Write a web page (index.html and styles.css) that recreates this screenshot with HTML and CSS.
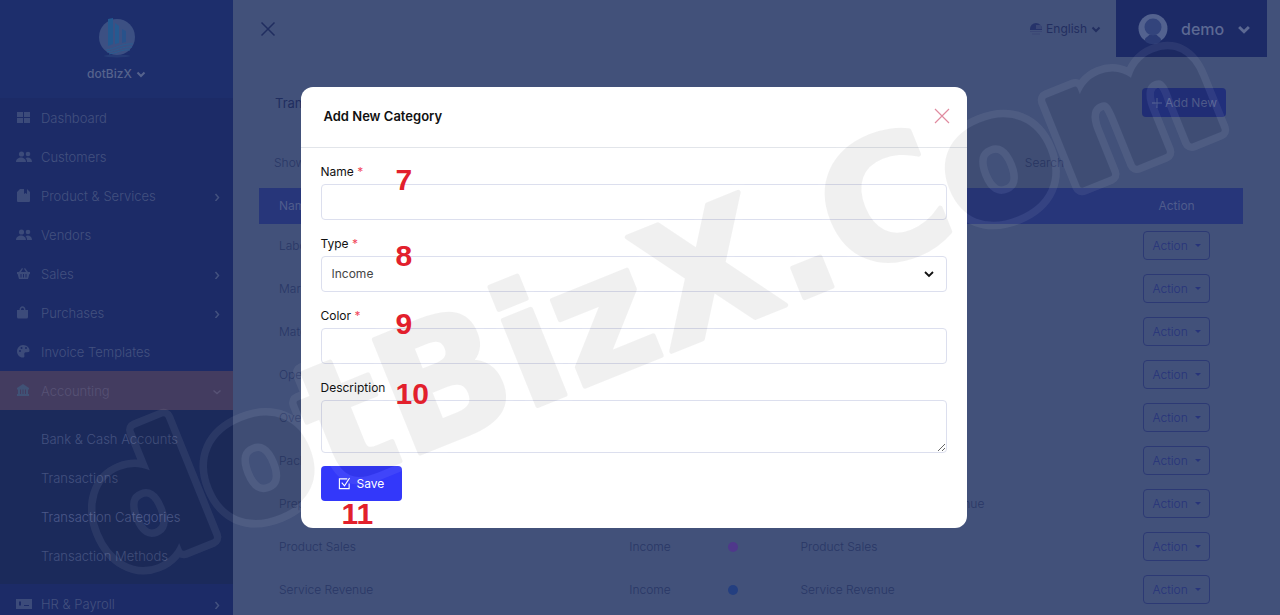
FILE: index.html
```html
<!DOCTYPE html>
<html lang="en">
<head>
<meta charset="utf-8">
<title>Transaction Categories - dotBizX</title>
<link rel="stylesheet" href="styles.css">
</head>
<body>
<div class="app">
  <nav class="sidebar">
    <div class="brand">
      <svg class="brand-logo" viewBox="0 0 40 42">
        <ellipse cx="20" cy="39" rx="13" ry="1.500" fill="#263b75"/>
        <circle cx="20" cy="20" r="18" fill="#3c5083"/>
        <path d="M11 2l5-1v26l-5 2z" fill="#23588f"/><path d="M18 6l4 3v17l-4 1z" fill="#255a91"/><path d="M25 12l4 2v11l-4 1z" fill="#28528b"/>
        <path d="M9 33c9-1 16-7 27-6M10 35c9-1 16-6 25-5M12 37c8-1 13-5 21-4" fill="none" stroke="#2a5c90" stroke-width="1"/>
      </svg>
      <button class="brand-name" type="button">dotBizX <svg class="caret" viewBox="0 0 10 10"><path d="M1.500 3.500L5 7l3.500-3.500"/></svg></button>
    </div>
    <ul class="menu">
      <li><a href="#"><svg class="icon" viewBox="0 0 16 16"><path d="M1 2h6v5H1zM8 2h6v5H8zM1 8h6v5H1zM8 8h6v5H8z"/></svg>Dashboard</a></li>
      <li><a href="#"><svg class="icon" viewBox="0 0 16 16"><circle cx="5.500" cy="5" r="2.600"/><circle cx="12" cy="5" r="2.300"/><path d="M0 13c0-6 10-6 10 0zM11 13c0-2-.5-3-1.500-4 3-1.500 6.500 0 6.500 4z"/></svg>Customers</a></li>
      <li><a href="#"><svg class="icon" viewBox="0 0 16 16"><path d="M4 1h4v5l1.500-1L11 6V1l3 3v9q0 1-1 1H2q-1 0-1-1V4z"/></svg>Product &amp; Services<svg class="chev" viewBox="0 0 10 10"><path d="M3.500 3L6.500 6.500 3.500 10"/></svg></a></li>
      <li><a href="#"><svg class="icon" viewBox="0 0 16 16"><circle cx="5.500" cy="5" r="2.600"/><circle cx="12" cy="5" r="2.300"/><path d="M0 13c0-6 10-6 10 0zM11 13c0-2-.5-3-1.500-4 3-1.500 6.500 0 6.500 4z"/></svg>Vendors</a></li>
      <li><a href="#"><svg class="icon" viewBox="0 0 16 16"><path fill-rule="evenodd" d="M1 6h2l3-4 1 .7L5 6h5L8 2.700 9 2l3 4h2v2h-.6L12 13H3L1.600 8H1zM4.500 8v3.500h1V8zM7 8v3.500h1V8zM9.500 8v3.500h1V8z"/></svg>Sales<svg class="chev" viewBox="0 0 10 10"><path d="M3.500 3L6.500 6.500 3.500 10"/></svg></a></li>
      <li><a href="#"><svg class="icon" viewBox="0 0 16 16"><path fill-rule="evenodd" d="M1 5h2.500c0-5 6-5 6 0H12v7q0 1.500-1.500 1.500h-8Q1 13.500 1 12zM5 5h3c0-3-3-3-3 0z"/></svg>Purchases<svg class="chev" viewBox="0 0 10 10"><path d="M3.500 3L6.500 6.500 3.500 10"/></svg></a></li>
      <li><a href="#"><svg class="icon" viewBox="0 0 16 16"><path fill-rule="evenodd" d="M7 1c4 0 7 3 6.500 6-.2 2-4 .5-5 2-.8 1.500 1 4-1 4.500C4 14 1 11 1 7.500S3.500 1 7 1zM3 7a1 1 0 102 0 1 1 0 00-2 0zm1.500-3a1 1 0 102 0 1 1 0 00-2 0zM9 4a1 1 0 102 0 1 1 0 00-2 0z"/></svg>Invoice Templates</a></li>
      <li class="active"><a href="#"><svg class="icon" viewBox="0 0 16 16"><path fill-rule="evenodd" d="M1 5l6-4 6 4v1.500h-1V11h1v2H1v-2h1V6.500H1zM4 6.500V11h1V6.500zm2.500 0V11h1V6.500zm2.500 0V11h1V6.500z"/></svg>Accounting<svg class="chev" viewBox="0 0 10 10"><path d="M1.500 4.500l3.500 3 3.500-3"/></svg></a>
        <ul class="submenu">
          <li><a href="#">Bank &amp; Cash Accounts</a></li>
          <li><a href="#">Transactions</a></li>
          <li class="current"><a href="#">Transaction Categories</a></li>
          <li><a href="#">Transaction Methods</a></li>
        </ul>
      </li>
      <li><a href="#"><svg class="icon" viewBox="0 0 16 16"><path fill-rule="evenodd" d="M0 3h16v10H0zM3 5.500v4h2v-4zM8 9v1h5V9z"/></svg>HR &amp; Payroll<svg class="chev" viewBox="0 0 10 10"><path d="M3.500 3L6.500 6.500 3.500 10"/></svg></a></li>
    </ul>
  </nav>

  <div class="content">
    <header class="topbar">
      <button class="toggle" type="button" aria-label="Toggle menu"><svg viewBox="0 0 16 16"><path d="M1.500 1.500l13 13M14.500 1.500l-13 13"/></svg></button>
      <button class="language" type="button"><svg class="flag" viewBox="0 0 12 12"><path d="M0 6a6 6 0 0112 0v1H0z" fill="#26336a"/><path d="M6 2h5l1 4H6zM0 8h12v1H0zM2 10.500h8v1H2z" fill="#3a4675"/></svg>English <svg class="caret" viewBox="0 0 10 10"><path d="M1.500 3.500L5 7l3.500-3.500"/></svg></button>
      <button class="user" type="button"><svg class="avatar" viewBox="0 0 30 30"><circle cx="15" cy="14.500" r="14.500" fill="#53628f"/><path d="M15 30c-5 0-8-2-8-4 0-3 3-3 4-5h8c1 2 4 2 4 5 0 2-3 4-8 4z" fill="#2b3b75"/><circle cx="15" cy="13" r="8.500" fill="#33447c"/></svg><span>demo</span><svg class="caret" viewBox="0 0 10 10"><path d="M1.500 3.500L5 7l3.500-3.500"/></svg></button>
    </header>
    <main class="page">
      <div class="page-head">
        <h1>Transaction Categories</h1>
        <button class="add" type="button"><svg viewBox="0 0 10 10"><path d="M5 0v10M0 5h10"/></svg>Add New</button>
      </div>
      <div class="filters"><span>Show</span><span class="search">Search</span></div>
      <table class="grid">
        <colgroup><col class="c-name"><col class="c-type"><col class="c-color"><col class="c-desc"><col class="c-act"></colgroup>
        <thead><tr><th>Name</th><th>Type</th><th>Color</th><th>Description</th><th class="act">Action</th></tr></thead>
        <tbody>
          <tr><td>Labor</td><td></td><td></td><td></td><td class="act"><button type="button">Action</button></td></tr>
          <tr><td>Marketing</td><td></td><td></td><td></td><td class="act"><button type="button">Action</button></td></tr>
          <tr><td>Materials</td><td></td><td></td><td></td><td class="act"><button type="button">Action</button></td></tr>
          <tr><td>Operating</td><td></td><td></td><td></td><td class="act"><button type="button">Action</button></td></tr>
          <tr><td>Overhead</td><td></td><td></td><td></td><td class="act"><button type="button">Action</button></td></tr>
          <tr><td>Packaging</td><td></td><td></td><td></td><td class="act"><button type="button">Action</button></td></tr>
          <tr><td>Prepaid</td><td></td><td></td><td>Prepayments and Other Revenue</td><td class="act"><button type="button">Action</button></td></tr>
          <tr><td>Product Sales</td><td>Income</td><td><i class="dot purple"></i></td><td>Product Sales</td><td class="act"><button type="button">Action</button></td></tr>
          <tr><td>Service Revenue</td><td>Income</td><td><i class="dot blue"></i></td><td>Service Revenue</td><td class="act"><button type="button">Action</button></td></tr>
        </tbody>
      </table>
    </main>
  </div>
</div>

<div class="overlay">
  <section class="modal" role="dialog" aria-labelledby="dialog-title">
    <header class="modal-head">
      <h2 id="dialog-title">Add New Category</h2>
      <button class="close" type="button" aria-label="Close"><svg viewBox="0 0 16 16"><path d="M1 1l14 14M15 1L1 15"/></svg></button>
    </header>
    <form class="modal-body">
      <div class="field"><label for="name">Name <em>*</em></label><input id="name" type="text"><b class="step">7</b></div>
      <div class="field"><label for="type">Type <em>*</em></label>
        <div class="select"><select id="type"><option>Income</option><option>Expense</option></select><svg viewBox="0 0 10 10"><path d="M1 3l4 4 4-4"/></svg></div><b class="step low">8</b></div>
      <div class="field"><label for="color">Color <em>*</em></label><input id="color" type="text"><b class="step">9</b></div>
      <div class="field"><label for="description">Description</label><textarea id="description"></textarea><b class="step high">10</b></div>
      <div class="actions"><button class="save" type="submit"><svg viewBox="0 0 14 14"><path d="M10 2H1.500v10.500H12V7M4 6l3 3.500L12.500 1"/></svg>Save</button><b class="step under">11</b></div>
    </form>
  </section>
</div>

<svg class="watermark" viewBox="0 0 1280 615" aria-hidden="true">
  <defs>
    <text id="mark" transform="translate(113 577) rotate(-22)">dotBizX.Com</text>
    <mask id="outside" maskUnits="userSpaceOnUse" x="0" y="0" width="1280" height="615">
      <rect width="1280" height="615" fill="#fff"/>
      <use href="#mark" fill="#000" stroke="#000" stroke-width="5"/>
    </mask>
  </defs>
  <g mask="url(#outside)"><use class="halo" href="#mark"/></g>
  <use class="ink" href="#mark"/>
</svg>
</body>
</html>
```
FILE: styles.css
```css
* { box-sizing: border-box; }
body {
  margin: 0;
  height: 100vh;
  overflow: hidden;
  position: relative;
  background: #42517a;
  color: #293766;
  font: 300 13px/20px Inter, "Open Sans", sans-serif;
}
button, input, select, textarea { font: inherit; color: inherit; }
button { border: 0; background: none; padding: 0; display: flex; align-items: center; cursor: pointer; }
a { color: inherit; text-decoration: none; }
ul { list-style: none; margin: 0; padding: 0; }
svg { flex: none; }
.caret, .chev { width: 10px; height: 10px; fill: none; stroke: currentColor; stroke-width: 2; }
.chev { margin-left: auto; stroke-width: 1.5; }

.app { display: flex; height: 100%; padding-right: 13px; overflow: hidden; }

.sidebar { width: 233px; flex: none; background: #1c2b67; color: #43517f; }
.brand { height: 98px; padding-top: 17px; display: flex; flex-direction: column; align-items: center; gap: 6px; background: #1d2e6c; }
.brand-logo { width: 40px; height: 42px; }
.brand-name { gap: 4px; font-size: 12px; font-weight: 500; line-height: 18px; color: #56638d; }
.menu a { display: flex; align-items: center; height: 39px; padding: 0 11px 0 16px; }
.icon { width: 16px; height: 16px; margin-right: 9px; fill: #3c4b7a; }
.active > a { background: #433c60; color: #575275; }
.active .icon { fill: #405276; }
.submenu { padding: 9px 0; background: #1b2a5b; }
.submenu a { padding-left: 41px; }
.submenu .current { color: #4c598a; }

.content { flex: 1; min-width: 0; }
.topbar { display: flex; height: 57px; align-items: center; padding-left: 27px; }
.toggle { margin-right: auto; color: #202d60; }
.toggle svg { width: 16px; height: 16px; fill: none; stroke: currentColor; stroke-width: 1.5; }
.language { gap: 4px; margin-right: 15px; font-size: 12px; font-weight: 400; color: #222e60; }
.flag { width: 12px; height: 12px; }
.user { height: 57px; width: 151px; padding: 0 20px 0 22px; gap: 13px; background: #1c2a66; color: #5c6993; font-size: 16px; font-weight: 500; }
.user .caret { width: 14px; height: 14px; margin-left: auto; }
.avatar { width: 30px; height: 30px; }

.page { padding: 31px 24px 0 26px; }
.page-head { display: flex; justify-content: space-between; align-items: center; padding: 0 17px 0 16px; }
.page-head h1 { margin: 0; font-size: 13px; font-weight: 400; color: #202d5f; }
.add { height: 29px; padding: 0 9px 0 10px; gap: 3px; border-radius: 4px; background: #212f7b; color: #515e91; font-weight: 400; font-size: 12px; }
.add svg { width: 10px; height: 10px; fill: none; stroke: currentColor; }
.filters { display: flex; justify-content: space-between; padding: 36px 179px 15px 15px; font-size: 12px; }
.grid { width: 100%; table-layout: fixed; border-collapse: collapse; font-size: 12px; }
.c-name { width: 35.600%; }
.c-type { width: 10%; }
.c-color { width: 7.400%; }
.c-desc { width: 33.500%; }
.grid th { height: 36px; padding: 0 20px; text-align: left; font-weight: 400; background: #27367a; color: #4f5c8c; }
.grid td { height: 43px; padding: 0 20px; white-space: nowrap; }
.grid .act { text-align: center; }
.act button { display: inline-flex; height: 29px; padding: 0 8px; gap: 7px; border: 1px solid #2c3974; border-radius: 4px; color: #27347a; vertical-align: middle; }
.act button::after { content: ""; border: 3px solid transparent; border-top-color: currentColor; border-bottom: 0; }
.dot { display: block; width: 10px; height: 10px; border-radius: 50%; }
.purple { background: #4f388b; }
.blue { background: #243f80; }

.overlay { position: absolute; inset: 0 13px 0 0; padding: 87px 20px 0; }
.modal { max-width: 666px; margin: 0 auto; border-radius: 12px; background: #fff; color: #111; }
.modal-head { display: flex; justify-content: space-between; align-items: center; height: 61px; padding: 0 17px 2px 23px; border-bottom: 1px solid #e2e5ea; }
.modal-head h2 { margin: 0; font-size: 13px; font-weight: 600; }
.close svg { width: 16px; height: 16px; fill: none; stroke: #e08ba0; stroke-width: 1.200; }
.modal-body { padding: 12px 20px 27px; font-size: 12px; font-weight: 400; }
.field { position: relative; margin-bottom: 12px; }
.field label { display: block; height: 24px; line-height: 23px; }
.field em { color: #f1475b; font-style: normal; }
.field input, .field select, .field textarea { display: block; width: 100%; height: 36px; padding: 0 10px; border: 1px solid #dcdfee; border-radius: 4px; background: #fff; color: #444; outline: 0; }
.field textarea { height: 53px; resize: vertical; }
.select { position: relative; }
.select select { appearance: none; }
.select svg { position: absolute; right: 13px; top: 13px; width: 10px; height: 10px; fill: none; stroke: #111; stroke-width: 1.800; pointer-events: none; }
.actions { position: relative; padding-top: 1px; }
.save { height: 35px; padding: 0 18px 0 17px; gap: 6px; border-radius: 4px; background: #3338fa; color: #fff; }
.save svg { width: 13px; height: 13px; fill: none; stroke: currentColor; stroke-width: 1.200; }
.step { position: absolute; z-index: 2; left: 75px; top: 4px; font-family: "Liberation Sans", Arial, sans-serif; font-size: 30px; font-weight: 700; line-height: 32px; color: #e2202c; }
.step.low { top: 8px; }
.step.high { top: 2px; }
.step.under { left: 21px; top: 33px; }

.watermark { position: absolute; inset: 0; z-index: 1; width: 100%; height: 100%; pointer-events: none; }
.watermark text { font: 700 168px "DejaVu Sans", sans-serif; stroke-linejoin: round; }
.halo { fill: #fff; stroke: #fff; stroke-width: 20px; opacity: 0.065; }
.ink { fill: #1e1e1e; stroke: #1e1e1e; stroke-width: 5px; opacity: 0.06; }
```
